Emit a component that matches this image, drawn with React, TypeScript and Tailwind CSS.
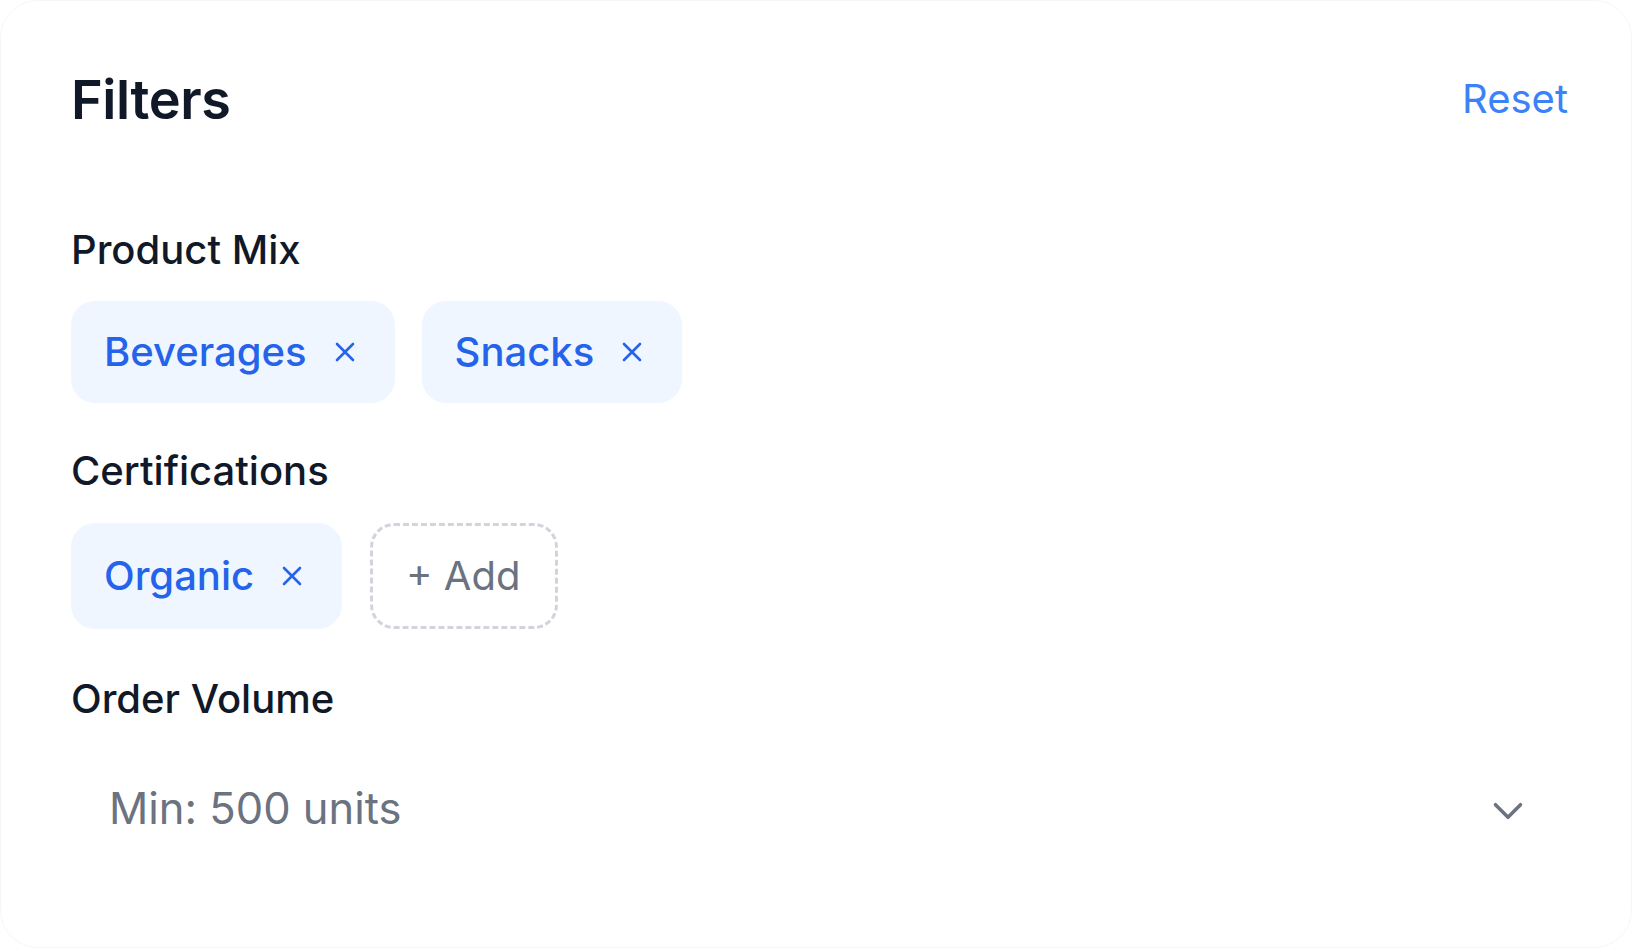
import React from "react";

function XIcon() {
  return (
    <svg width="20" height="20" viewBox="0 0 20 20" fill="none" className="shrink-0">
      <path d="M2 2L18 18M18 2L2 18" stroke="currentColor" strokeWidth="2.6" strokeLinecap="round" />
    </svg>
  );
}

function Chip({ label }: { label: string }) {
  return (
    <div className="flex items-center gap-[28px] rounded-[24px] bg-[#eff6ff] pl-[33px] pr-[40px] min-h-[102px] text-[40px] font-medium text-[#2563eb]">
      <span className="leading-[48px]">{label}</span>
      <XIcon />
    </div>
  );
}

function Label({ children }: { children: React.ReactNode }) {
  return <div className="text-[40px] leading-[60px] font-medium text-[#111827]">{children}</div>;
}

export default function App() {
  return (
    <div className="w-[1632px] h-[948px] bg-white" style={{ fontFamily: "Inter, 'Noto Sans', sans-serif" }}>
      <div className="w-full h-full rounded-[38px] border border-[#f6f6f8] bg-white pt-[66px] pl-[70px] pr-[63px]">
        <div className="flex items-center justify-between h-[66px]">
          <h2 className="text-[54px] leading-[66px] font-semibold text-[#111827] tracking-[-0.4px]">Filters</h2>
          <button className="text-[40px] leading-[66px] text-[#3b82f6] mt-[-2px]">Reset</button>
        </div>

        <div className="mt-[87px]">
          <Label>Product Mix</Label>
          <div className="mt-[21px] flex gap-[27px]">
            <Chip label="Beverages" />
            <Chip label="Snacks" />
          </div>
        </div>

        <div className="mt-[38px]">
          <Label>Certifications</Label>
          <div className="mt-[22px] flex gap-[28px]">
            <Chip label="Organic" />
            <button className="flex items-center h-[106px] rounded-[24px] border-[3px] border-dashed border-[#d1d5db] pl-[33px] pr-[35px] text-[40px] text-[#6b7280]">
              + Add
            </button>
          </div>
        </div>

        <div className="mt-[40px]">
          <Label>Order Volume</Label>
          <div className="mt-[22px] flex items-center justify-between h-[116px] pl-[38px] pr-[35px]">
            <span className="text-[43.5px] text-[#6b7280]">Min: 500 units</span>
            <svg width="50" height="50" viewBox="0 0 24 24" fill="none" stroke="#6b7280" strokeWidth="1.7" strokeLinecap="round" strokeLinejoin="round" className="mt-[3px]">
              <path d="m6 9 6 6 6-6" />
            </svg>
          </div>
        </div>
      </div>
    </div>
  );
}
